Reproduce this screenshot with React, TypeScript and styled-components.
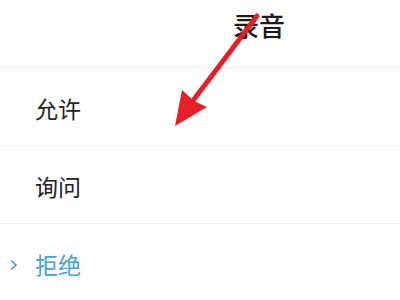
import React from 'react';
import styled, { createGlobalStyle } from 'styled-components';

const GlobalStyle = createGlobalStyle`
    html, body {
        margin: 0;
        padding: 0;
        background: #ffffff;
    }
    body {
        font-family: 'Noto Sans CJK SC', 'Noto Sans', sans-serif;
    }
`;

interface Option {
    label: string;
    selected?: boolean;
}

const options: Option[] = [{ label: '允许' }, { label: '询问' }, { label: '拒绝', selected: true }];

const App = () => (
    <Screen>
        <GlobalStyle />
        <Header>
            <Title>录音</Title>
        </Header>
        <List>
            {options.map(({ label, selected }) => (
                <Row key={label}>
                    <Mark visible={!!selected}>
                        <svg width="9" height="12" viewBox="0 0 9 12">
                            <path d="M2 1.5 L7 6 L2 10.5" fill="none" stroke="currentColor" strokeWidth="1.6" />
                        </svg>
                    </Mark>
                    <Label selected={!!selected}>{label}</Label>
                </Row>
            ))}
        </List>
        <Arrow width="400" height="300" viewBox="0 0 400 300">
            <line x1="257" y1="16" x2="192" y2="102" stroke="#e61e28" strokeWidth="5" strokeLinecap="round" />
            <polygon points="175,126 182,90 194,101 207,107" fill="#e61e28" />
        </Arrow>
    </Screen>
);

export default App;

const Screen = styled.div`
    position: relative;
    width: 400px;
    height: 300px;
    overflow: hidden;
    background: #ffffff;
`;

const Header = styled.div`
    height: 67px;
    display: flex;
    justify-content: center;
    align-items: flex-start;
    padding-left: 118px;
    box-sizing: border-box;
`;

const Title = styled.span`
    margin-top: 9px;
    font-size: 26px;
    line-height: 32px;
    font-weight: 500;
    color: #1c1c1c;
`;

const List = styled.div`
    display: flex;
    flex-direction: column;
`;

const Row = styled.div`
    height: 78px;
    display: flex;
    align-items: center;
    padding-left: 9px;
    border-top: 1px solid #ececec;
    box-sizing: border-box;
`;

const Mark = styled.span<{ visible: boolean }>`
    width: 26px;
    display: flex;
    align-items: center;
    margin-top: 4px;
    color: #5b97b8;
    visibility: ${({ visible }) => (visible ? 'visible' : 'hidden')};
`;

const Label = styled.span<{ selected: boolean }>`
    font-size: 23px;
    line-height: 30px;
    margin-top: 3px;
    color: ${({ selected }) => (selected ? '#46a2d6' : '#222222')};
`;

const Arrow = styled.svg`
    position: absolute;
    top: 0;
    left: 0;
    pointer-events: none;
`;
